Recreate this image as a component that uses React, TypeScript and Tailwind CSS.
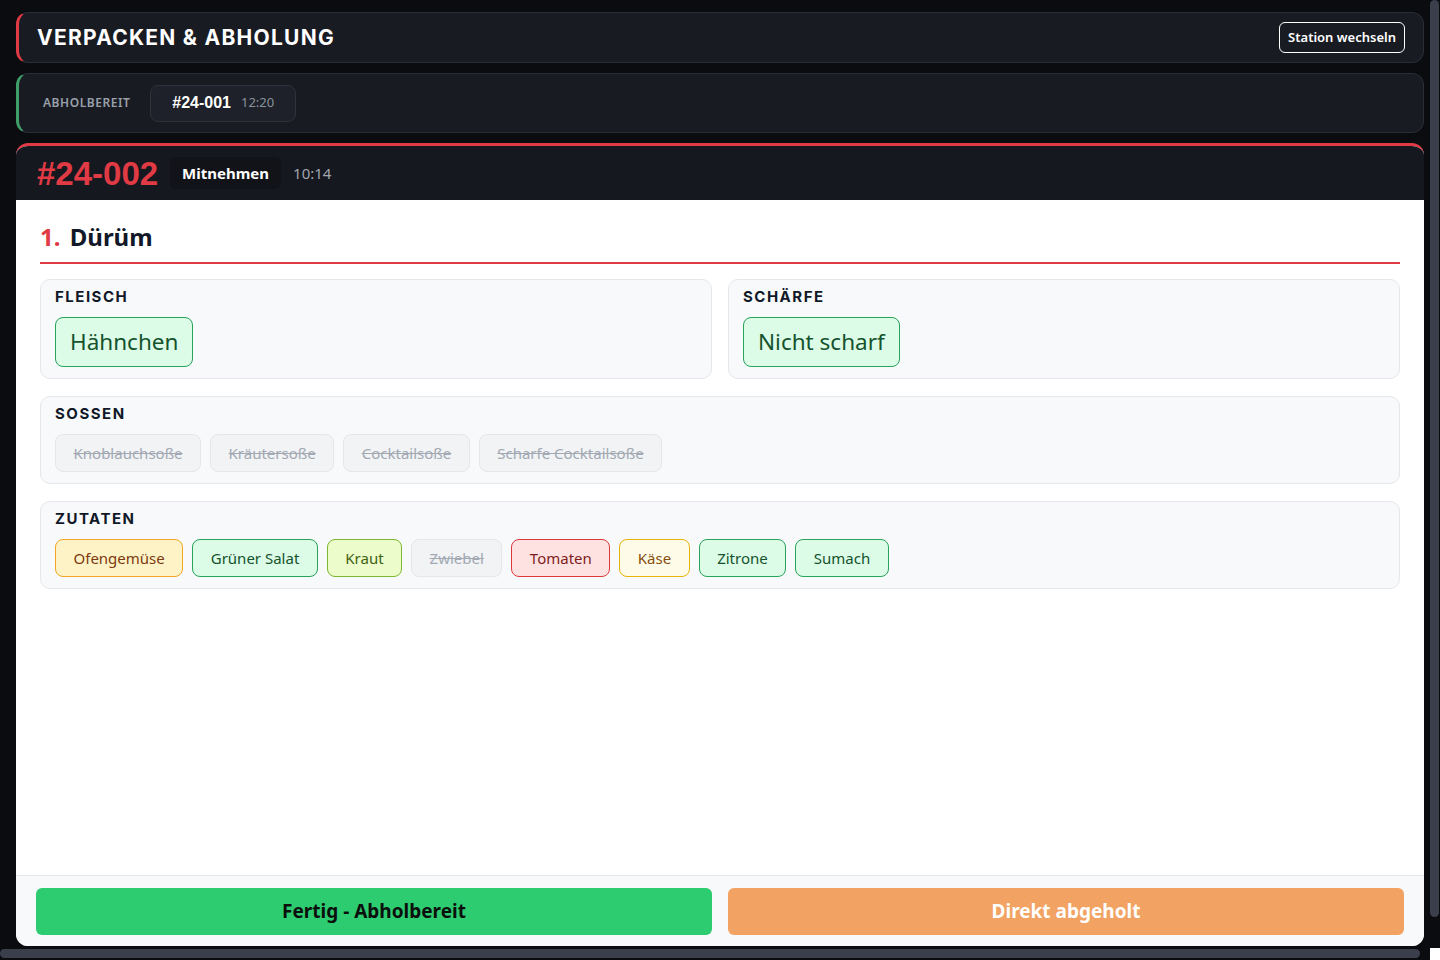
import React from 'react';

const body = { fontFamily: '"Noto Sans", "Open Sans", sans-serif' };
const display = { fontFamily: 'Inter, "Noto Sans", sans-serif' };
const arial = { fontFamily: '"Liberation Sans", Arial, sans-serif' };

type Tone = 'green' | 'amber' | 'lime' | 'red' | 'yellow' | 'off';

const toneClass: Record<Tone, string> = {
  green: 'bg-[#dcfce7] border-[#27a35a] text-[#14532d]',
  amber: 'bg-[#fef3c7] border-[#f5a524] text-[#7c3a0e]',
  lime: 'bg-[#ecfccb] border-[#7cb82f] text-[#3f6212]',
  red: 'bg-[#fee2e2] border-[#dc3a3a] text-[#7f1d1d]',
  yellow: 'bg-[#fefce8] border-[#eab308] text-[#854d0e]',
  off: 'bg-[#f1f3f5] border-[#e5e7eb] text-[#a3a9b3] line-through',
};

const sossen = ['Knoblauchsoße', 'Kräutersoße', 'Cocktailsoße', 'Scharfe Cocktailsoße'];

const zutaten: { name: string; tone: Tone }[] = [
  { name: 'Ofengemüse', tone: 'amber' },
  { name: 'Grüner Salat', tone: 'green' },
  { name: 'Kraut', tone: 'lime' },
  { name: 'Zwiebel', tone: 'off' },
  { name: 'Tomaten', tone: 'red' },
  { name: 'Käse', tone: 'yellow' },
  { name: 'Zitrone', tone: 'green' },
  { name: 'Sumach', tone: 'green' },
];

function Chip({ label, tone }: { label: string; tone: Tone }) {
  return (
    <span className={`rounded-lg border px-[17.5px] py-2 text-[15px] leading-5 ${toneClass[tone]}`}>
      {label}
    </span>
  );
}

function BigChip({ label }: { label: string }) {
  return (
    <span className="rounded-lg border border-[#27a35a] bg-[#dcfce7] px-[14px] py-2 text-[22.5px] leading-8 text-[#14532d]">
      {label}
    </span>
  );
}

function Section({ title, children }: { title: string; children: React.ReactNode }) {
  return (
    <div className="rounded-[10px] border border-[#e5e7eb] bg-[#f8f9fb] px-[14px] pb-[11px] pt-[9px]">
      <div style={display} className="mb-3 text-[15px] font-bold leading-4 tracking-[0.1em] text-[#111827]">
        {title}
      </div>
      <div className="flex flex-wrap gap-[9px]">{children}</div>
    </div>
  );
}

export default function App() {
  return (
    <div style={body} className="flex h-screen w-full flex-col overflow-hidden bg-[#0b0c10]">
      <div className="flex min-h-0 flex-1">
        {/* viewport */}
        <div className="w-[1430px] overflow-hidden">
          <div className="flex h-[982px] w-[1440px] flex-col gap-[10px] px-4 pb-9 pt-3">
            {/* station header */}
            <div className="flex h-[51px] shrink-0 items-center justify-between rounded-xl border border-[#2a2d36] border-l-[3px] border-l-[#e03a44] bg-[#191b22] pl-[18px] pr-[18px]">
              <h1 style={display} className="text-[21px] font-bold tracking-[0.06em] text-white">
                VERPACKEN &amp; ABHOLUNG
              </h1>
              <button className="rounded-md border border-white px-2 py-[5px] text-[13px] font-semibold leading-[19px] text-white">
                Station wechseln
              </button>
            </div>

            {/* ready list */}
            <div className="flex h-[60px] shrink-0 items-center gap-5 rounded-xl border border-[#2a2d36] border-l-[3px] border-l-[#3f9f68] bg-[#191b22] pl-6">
              <span className="text-xs font-semibold tracking-[0.045em] text-[#9aa0aa]">ABHOLBEREIT</span>
              <div className="flex h-[37px] items-center gap-[10px] rounded-lg border border-[#2e323c] bg-[#1e2129] px-[21px]">
                <span style={arial} className="text-[16px] font-bold text-white">#24-001</span>
                <span className="text-[13px] text-[#8b919c]">12:20</span>
              </div>
            </div>

            {/* current order */}
            <div className="flex min-h-0 flex-1 flex-col overflow-hidden rounded-xl border-t-[3px] border-t-[#e03a44] bg-white">
              <div className="flex h-[54px] shrink-0 items-center gap-3 bg-[#161820] px-[21px]">
                <span style={arial} className="text-[33px] font-bold leading-none text-[#e03a44]">#24-002</span>
                <span className="rounded-md bg-[#111318] px-3 py-[5px] text-[15px] font-bold text-white">Mitnehmen</span>
                <span className="text-[15px] text-[#a0a5ae]">10:14</span>
              </div>

              <div className="flex-1 p-6">
                <div className="mb-[15px] border-b-2 border-[#e03a44] pb-3 text-2xl font-bold leading-[26px] text-[#111827]">
                  <span className="mr-[3px] text-[#e03a44]">1.</span> Dürüm
                </div>

                <div className="flex flex-col gap-[17px]">
                  <div className="grid grid-cols-2 gap-4">
                    <Section title="FLEISCH">
                      <BigChip label="Hähnchen" />
                    </Section>
                    <Section title="SCHÄRFE">
                      <BigChip label="Nicht scharf" />
                    </Section>
                  </div>

                  <Section title="SOSSEN">
                    {sossen.map((s) => (
                      <Chip key={s} label={s} tone="off" />
                    ))}
                  </Section>

                  <Section title="ZUTATEN">
                    {zutaten.map((z) => (
                      <Chip key={z.name} label={z.name} tone={z.tone} />
                    ))}
                  </Section>
                </div>
              </div>

              <div className="grid shrink-0 grid-cols-2 gap-4 border-t border-[#e5e7eb] bg-[#f8f9fb] px-5 pb-[11px] pt-3">
                <button className="h-[47px] rounded-md bg-[#2ecc71] text-[19px] font-bold text-[#0b0f0c]">
                  Fertig - Abholbereit
                </button>
                <button className="h-[47px] rounded-md bg-[#f2a262] text-[19px] font-bold text-white">
                  Direkt abgeholt
                </button>
              </div>
            </div>
          </div>
        </div>

        {/* vertical scrollbar */}
        <div className="w-[10px] shrink-0">
          <div className="h-[917px] w-[9px] rounded-full bg-[#3b3f4b]" />
        </div>
      </div>

      {/* horizontal scrollbar */}
      <div className="flex h-[12px] shrink-0">
        <div className="w-[1430px] pt-px">
          <div className="h-[9px] w-[1420px] rounded-full bg-[#3b3f4b]" />
        </div>
        <div className="w-[10px] bg-white" />
      </div>
    </div>
  );
}
